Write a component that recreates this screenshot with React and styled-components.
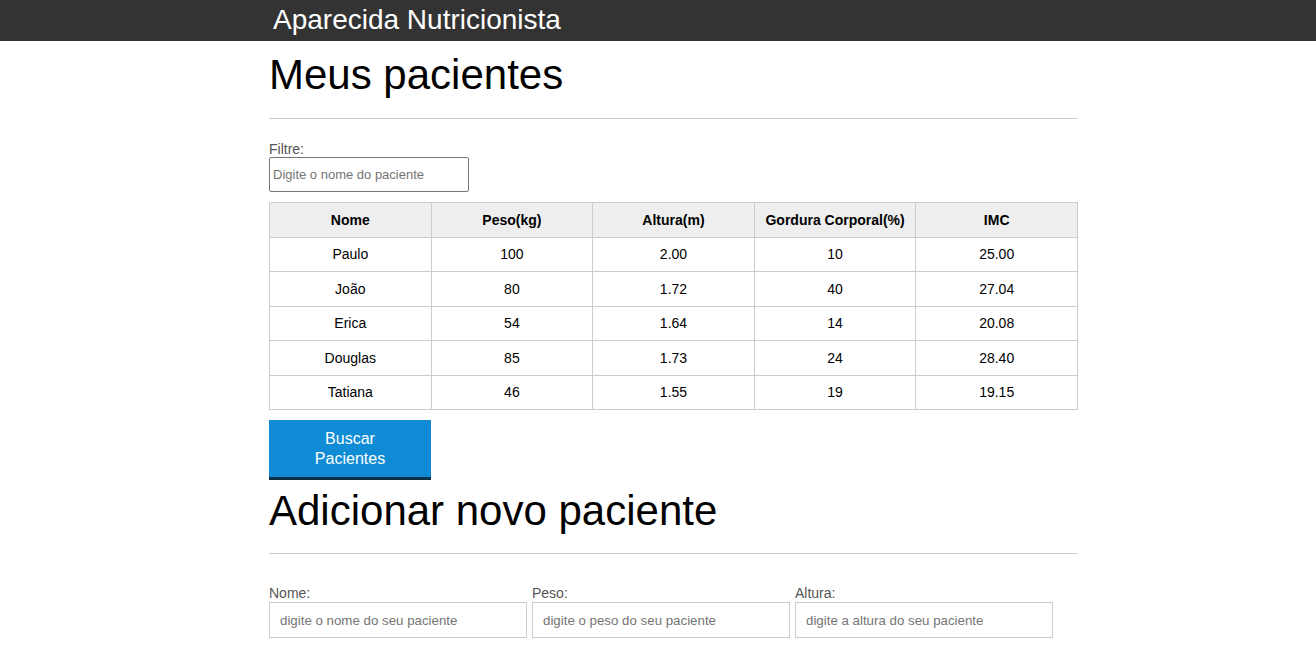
import styled, { createGlobalStyle } from "styled-components"

const GlobalStyle = createGlobalStyle`
  * { box-sizing: border-box; }
  body {
    margin: 0;
    font-family: "Liberation Sans", Arial, sans-serif;
    background: #fff;
    color: #000;
  }
`

const Header = styled.header`
  background-color: #333;
  height: 41px;
`

const Container = styled.div`
  width: 809px;
  margin-left: 269px;
`

const Brand = styled.h1`
  margin: 0;
  padding-left: 4px;
  color: #fff;
  font-size: 28px;
  font-weight: normal;
  line-height: 40px;
`

const Title = styled.h2`
  margin: 0;
  padding-top: ${props => props.$top}px;
  font-size: 42px;
  font-weight: normal;
  line-height: 46px;
`

const Rule = styled.hr`
  border: none;
  border-top: 1px solid #ccc;
  margin: ${props => props.$top}px 0 0;
`

const Label = styled.label`
  display: block;
  color: #555;
  font-size: 14px;
  line-height: 16px;
  margin-bottom: ${props => props.$gap || 0}px;
`

const FilterBox = styled.div`
  margin-top: 22px;
`

const FilterInput = styled.input`
  display: block;
  width: 200px;
  height: 35px;
  border: 1px solid #767676;
  border-radius: 2px;
  padding: 0 3px;
  font-family: inherit;
  font-size: 13px;
  &::placeholder { color: #757575; }
`

const Table = styled.table`
  width: 809px;
  margin-top: 10px;
  border-collapse: collapse;
  font-size: 14px;
`

const Th = styled.th`
  background-color: #eee;
  border: 1px solid #ccc;
  height: 34.5px;
  font-size: 14px;
  text-align: center;
  width: 20%;
  padding: 0;
`

const Td = styled.td`
  border: 1px solid #ccc;
  height: 34.5px;
  text-align: center;
  padding: 0;
`

const Button = styled.button`
  display: block;
  margin-top: 10px;
  width: 162px;
  height: 60px;
  background-color: #108cd6;
  border: none;
  border-bottom: 3px solid #0a2f4a;
  color: #fff;
  font-family: inherit;
  font-size: 16px;
  line-height: 20px;
  padding: 0;
`

const FormRow = styled.div`
  display: flex;
  gap: 5px;
  margin-top: 31px;
`

const Field = styled.div`
  width: 258px;
`

const FormInput = styled.input`
  display: block;
  width: 100%;
  height: 36px;
  border: 1px solid #ccc;
  padding: 0 10px;
  font-family: inherit;
  font-size: 13.3px;
  &::placeholder { color: #757575; }
`

const pacientes = [
  ["Paulo", "100", "2.00", "10", "25.00"],
  ["João", "80", "1.72", "40", "27.04"],
  ["Erica", "54", "1.64", "14", "20.08"],
  ["Douglas", "85", "1.73", "24", "28.40"],
  ["Tatiana", "46", "1.55", "19", "19.15"],
]

const App = () => {
  return (
    <>
      <GlobalStyle />
      <Header>
        <Container>
          <Brand>Aparecida Nutricionista</Brand>
        </Container>
      </Header>
      <Container>
        <Title $top={11}>Meus pacientes</Title>
        <Rule $top={20} />
        <FilterBox>
          <Label htmlFor="filtro">Filtre:</Label>
          <FilterInput id="filtro" placeholder="Digite o nome do paciente" />
        </FilterBox>
        <Table>
          <thead>
            <tr>
              <Th>Nome</Th>
              <Th>Peso(kg)</Th>
              <Th>Altura(m)</Th>
              <Th>Gordura Corporal(%)</Th>
              <Th>IMC</Th>
            </tr>
          </thead>
          <tbody>
            {pacientes.map(p => (
              <tr key={p[0]}>
                {p.map((v, i) => <Td key={i}>{v}</Td>)}
              </tr>
            ))}
          </tbody>
        </Table>
        <Button>Buscar<br />Pacientes</Button>
        <Title $top={8}>Adicionar novo paciente</Title>
        <Rule $top={19} />
        <FormRow>
          <Field>
            <Label $gap={1}>Nome:</Label>
            <FormInput placeholder="digite o nome do seu paciente" />
          </Field>
          <Field>
            <Label $gap={1}>Peso:</Label>
            <FormInput placeholder="digite o peso do seu paciente" />
          </Field>
          <Field>
            <Label $gap={1}>Altura:</Label>
            <FormInput placeholder="digite a altura do seu paciente" />
          </Field>
        </FormRow>
      </Container>
    </>
  )
}

export default App
